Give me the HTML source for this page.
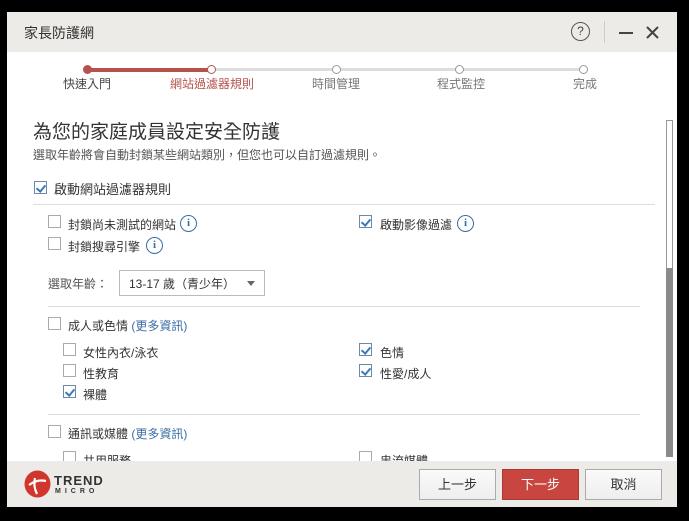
<!DOCTYPE html>
<html><head><meta charset="utf-8"><style>
*{margin:0;padding:0;box-sizing:border-box}
body{width:689px;height:521px;background:#000;position:relative;overflow:hidden;font-family:"Liberation Sans","Noto Sans CJK TC",sans-serif;color:#333}
.win{position:absolute;left:7px;top:12px;width:670px;height:495px;background:#fff;overflow:hidden}
.a{position:absolute;white-space:nowrap}
.cb{position:absolute;width:13px;height:13px;border:1px solid #aaa;background:#fff}
.cb.on{border-color:#6b8aa8}
.cb.on::after{content:"";position:absolute;left:3px;top:1px;width:4px;height:7px;border:solid #3c78b4;border-width:0 2px 2px 0;transform:rotate(40deg)}
.info{position:absolute;width:17px;height:17px;border:1.5px solid #3a6ea5;border-radius:50%;color:#3a6ea5;font:bold 11px "Liberation Serif",serif;text-align:center;line-height:14px}
.t{font-size:12px;color:#333}
.hr{position:absolute;height:1px;background:#ddd}
.link{color:#3a6ea5}
.btn{position:absolute;top:457px;height:31px;width:77px;border:1px solid #aaa;background:linear-gradient(#fafafa,#eee);font-size:13px;text-align:center;line-height:29px;color:#333}
</style></head><body>
<div class="win">
 <div class="a" style="left:0;top:0;width:670px;height:40px;background:#ecebe8"></div>
 <div class="a" style="left:17px;top:11px;font-size:14px;color:#333">家長防護網</div>
 <div class="a" style="left:564px;top:10px;width:19px;height:19px;border:1.5px solid #555;border-radius:50%;font-size:12px;text-align:center;line-height:16px;color:#444">?</div>
 <div class="a" style="left:597px;top:9px;width:1px;height:22px;background:#ccc"></div>
 <div class="a" style="left:612px;top:20px;width:14px;height:2px;background:#444"></div>
 <svg class="a" style="left:639px;top:14px" width="13" height="13"><path d="M1 1L12 12M12 1L1 12" stroke="#444" stroke-width="2"/></svg>

 <div class="a" style="left:80px;top:56px;width:124px;height:4px;background:#b5524c"></div>
 <div class="a" style="left:204px;top:56px;width:372px;height:3px;background:#ddd"></div>
 <div class="a" style="left:76px;top:53px;width:9px;height:9px;border-radius:50%;background:#b5524c"></div>
 <div class="a" style="left:200px;top:53px;width:9px;height:9px;border-radius:50%;background:#fff;border:1.5px solid #b5524c"></div>
 <div class="a" style="left:325px;top:53px;width:9px;height:9px;border-radius:50%;background:#fff;border:1px solid #999"></div>
 <div class="a" style="left:448px;top:53px;width:9px;height:9px;border-radius:50%;background:#fff;border:1px solid #999"></div>
 <div class="a" style="left:572px;top:53px;width:9px;height:9px;border-radius:50%;background:#fff;border:1px solid #999"></div>
 <div class="a t" style="left:56px;top:63px;color:#444">快速入門</div>
 <div class="a t" style="left:163px;top:63px;color:#b5524c">網站過濾器規則</div>
 <div class="a t" style="left:305px;top:63px;color:#777">時間管理</div>
 <div class="a t" style="left:430px;top:63px;color:#777">程式監控</div>
 <div class="a t" style="left:566px;top:63px;color:#777">完成</div>

 <div class="a" style="left:0;top:98px;width:670px;height:351px;overflow:hidden">
  <div class="a" style="left:26px;top:7px;font-size:19px;color:#333">為您的家庭成員設定安全防護</div>
  <div class="a" style="left:26px;top:36px;font-size:12px;color:#555">選取年齡將會自動封鎖某些網站類別，但您也可以自訂過濾規則。</div>
  <div class="cb on" style="left:27px;top:71px"></div>
  <div class="a" style="left:47px;top:69px;font-size:13px">啟動網站過濾器規則</div>
  <div class="hr" style="left:26px;top:94px;width:622px"></div>

  <div class="cb" style="left:41px;top:105px"></div>
  <div class="a t" style="left:61px;top:106px">封鎖尚未測試的網站</div>
  <div class="info" style="left:173px;top:105px">i</div>
  <div class="cb on" style="left:352px;top:105px"></div>
  <div class="a t" style="left:373px;top:106px">啟動影像過濾</div>
  <div class="info" style="left:450px;top:105px">i</div>
  <div class="cb" style="left:41px;top:127px"></div>
  <div class="a t" style="left:61px;top:128px">封鎖搜尋引擎</div>
  <div class="info" style="left:139px;top:127px">i</div>

  <div class="a t" style="left:41px;top:165px;color:#555">選取年齡：</div>
  <div class="a" style="left:112px;top:160px;width:146px;height:26px;border:1px solid #bbb"></div>
  <div class="a t" style="left:122px;top:165px">13-17 歲（青少年）</div>
  <div class="a" style="left:240px;top:171px;border:4px solid transparent;border-top:5px solid #666"></div>

  <div class="hr" style="left:41px;top:196px;width:592px"></div>
  <div class="cb" style="left:41px;top:207px"></div>
  <div class="a t" style="left:61px;top:207px">成人或色情 <span class="link">(更多資訊)</span></div>

  <div class="cb" style="left:56px;top:233px"></div>
  <div class="a t" style="left:76px;top:234px">女性內衣/泳衣</div>
  <div class="cb on" style="left:352px;top:233px"></div>
  <div class="a t" style="left:373px;top:234px">色情</div>
  <div class="cb" style="left:56px;top:254px"></div>
  <div class="a t" style="left:76px;top:255px">性教育</div>
  <div class="cb on" style="left:352px;top:254px"></div>
  <div class="a t" style="left:373px;top:255px">性愛/成人</div>
  <div class="cb on" style="left:56px;top:275px"></div>
  <div class="a t" style="left:76px;top:276px">裸體</div>

  <div class="hr" style="left:41px;top:304px;width:592px"></div>
  <div class="cb" style="left:41px;top:315px"></div>
  <div class="a t" style="left:61px;top:315px">通訊或媒體 <span class="link">(更多資訊)</span></div>
  <div class="cb" style="left:56px;top:341px"></div>
  <div class="a t" style="left:76px;top:342px">共用服務</div>
  <div class="cb" style="left:352px;top:341px"></div>
  <div class="a t" style="left:373px;top:342px">串流媒體</div>
 </div>
 <div class="a" style="left:659px;top:108px;width:7px;height:337px;border:1px solid #999;background:#fff"></div>
 <div class="a" style="left:659px;top:256px;width:7px;height:189px;background:#8a8a8a"></div>

 <div class="a" style="left:0;top:449px;width:670px;height:46px;background:#ecebe8"></div>
 <svg class="a" style="left:17px;top:458px" width="27" height="28" viewBox="0 0 27 28"><ellipse cx="13.5" cy="14" rx="13" ry="13.5" fill="#d1352b"/><path d="M5 15 Q13 9 22 11 M11 8 Q9 16 13 24" stroke="#fff" stroke-width="2.2" fill="none"/></svg>
 <div class="a" style="left:47px;top:461px;font:bold 13px 'Liberation Sans',sans-serif;color:#333;letter-spacing:1px">TREND</div>
 <div class="a" style="left:48px;top:476px;font:bold 7px 'Liberation Sans',sans-serif;color:#333;letter-spacing:4px">MICRO</div>
 <div class="btn" style="left:412px">上一步</div>
 <div class="btn" style="left:495px;background:#c8463f;border-color:#a83a34;color:#fff">下一步</div>
 <div class="btn" style="left:578px">取消</div>
</div>
</body></html>
